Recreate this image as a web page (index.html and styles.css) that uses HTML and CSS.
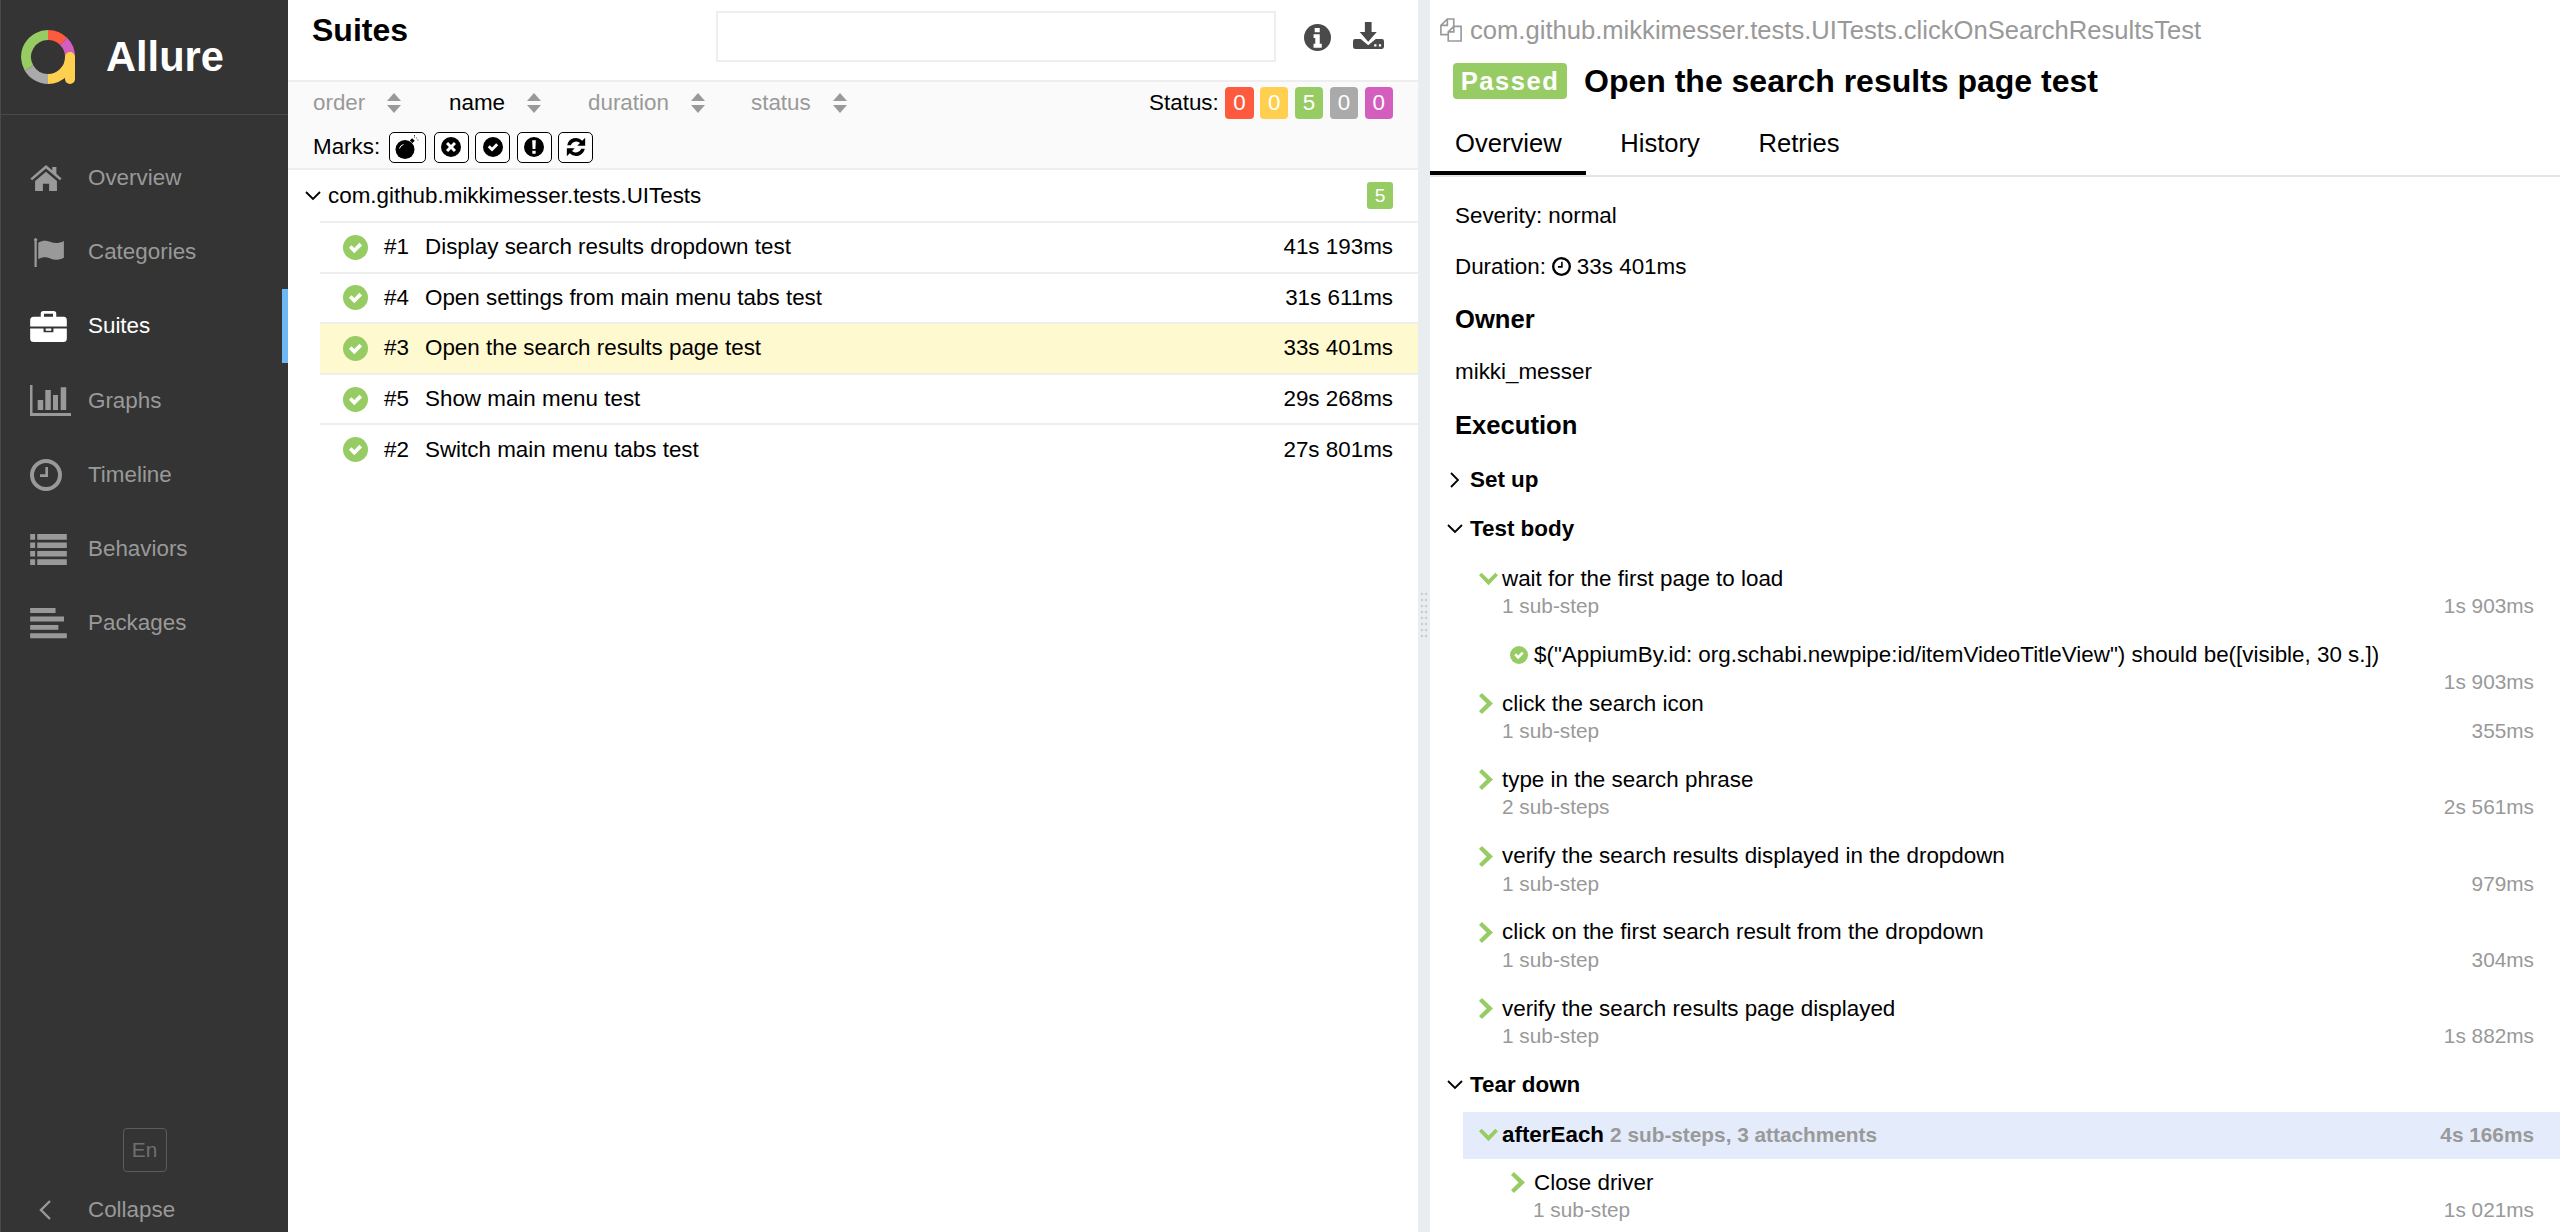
FILE: index.html
```html
<!DOCTYPE html>
<html lang="en">
<head>
<meta charset="UTF-8">
<title>Allure Report</title>
<link rel="stylesheet" href="styles.css">
</head>
<body>

<svg class="sprites" xmlns="http://www.w3.org/2000/svg">
  <symbol id="i-home" viewBox="0 0 24 20"><path d="M12 0 0 10.300l1.300 1.500L12 2.700l10.700 9.100 1.300-1.500-4-3.500V1.500h-3.200v2.600zM3.600 12.300 12 5.200l8.400 7.100V20h-6v-5.500H9.600V20h-6z"/></symbol>
  <symbol id="i-flag" viewBox="0 0 26 24"><path d="M1 3.200a1.300 1.300 0 1 1 1.800 0V24H1zM4 4.500c4-2.300 7-1.700 10-.5s6.500 1.300 10.500-.8v13.300c-4 2.100-7.500 2-10.500.8s-6-1.800-10 .5z"/></symbol>
  <symbol id="i-case" viewBox="0 0 26 22"><path fill-rule="evenodd" d="M7.500 4V1.800A1.800 1.800 0 0 1 9.300 0h7.400a1.800 1.800 0 0 1 1.800 1.800V4h5.300A2.500 2.500 0 0 1 26 6.500V11H0V6.500A2.500 2.500 0 0 1 2.500 4zm2.300 0h6.400V2H9.800zM0 12.500h9.500V15h7v-2.500H26v7a2.500 2.500 0 0 1-2.500 2.500h-21A2.500 2.500 0 0 1 0 19.500zM11 12.500h4V14h-4z"/></symbol>
  <symbol id="i-chart" viewBox="0 0 41 31"><path d="M0 0h2.500v28H41v3H0zM7.700 15h5.500v10H7.700zM15.300 5h5.500v20h-5.500zM23 10h5v15h-5zM30.700 2.300h5.500V25h-5.500z"/></symbol>
  <symbol id="i-clock" viewBox="0 0 24 24"><path fill-rule="evenodd" d="M12 0a12 12 0 1 1 0 24 12 12 0 0 1 0-24zm0 3a9 9 0 1 0 0 18 9 9 0 0 0 0-18zM13.500 6v7.500H7.500v-2h4V6z"/></symbol>
  <symbol id="i-list" viewBox="0 0 26 22"><path d="M0 0h3.500v4H0zM5 0h21v4H5zM0 6h3.500v4H0zM5 6h21v4H5zM0 12h3.500v4H0zM5 12h21v4H5zM0 18h3.500v4H0zM5 18h21v4H5z"/></symbol>
  <symbol id="i-pack" viewBox="0 0 26 22"><path d="M0 0h18v3.500H0zM0 6h24v3.500H0zM0 12h20v3.500H0zM0 18h26v3.500H0z"/></symbol>
  <symbol id="i-check" viewBox="0 0 24 24"><circle cx="12" cy="12" r="12"/><path d="m5.700 12.300 2.500-2.500 2.600 2.700 5-5 2.500 2.500-7.500 7.500z" fill="#fff"/></symbol>
  <symbol id="i-times" viewBox="0 0 24 24"><circle cx="12" cy="12" r="12"/><path d="m8.500 6 3.500 3.500L15.500 6 18 8.500 14.500 12l3.500 3.500-2.500 2.500-3.500-3.500L8.500 18 6 15.500 9.500 12 6 8.500z" fill="#fff"/></symbol>
  <symbol id="i-warn" viewBox="0 0 24 24"><circle cx="12" cy="12" r="12"/><path d="M9.800 4h4.400l-.5 10.500h-3.400zM10 16.500h4V20h-4z" fill="#fff"/></symbol>
  <symbol id="i-info" viewBox="0 0 24 24"><circle cx="12" cy="12" r="12"/><path d="M9.500 3.500h4.500v3.800H9.500zM8.500 9h5.500v8.500h1.800V21H8.500v-3.500h1.500v-5H8.500z" fill="#fff"/></symbol>
  <symbol id="i-bomb" viewBox="0 0 24 24"><circle cx="10" cy="14.500" r="9.500"/><path d="m14.800 5.400 2.400-2.200 2.500 2.500-2.200 2.400z"/><path d="M4.500 13.500a5.500 5.500 0 0 1 4-4" fill="none" stroke="#fff" stroke-width="1"/><path d="M19 2h.8M22 2.500l-.6.600M19.500 0v.8M22.500 5h.8" stroke="#000" stroke-width="1"/></symbol>
  <symbol id="i-refresh" viewBox="0 0 24 24"><path d="M23 1v9.500h-9.500l3.300-3.300a6.800 6.800 0 0 0-11 2.600H1.500A10.500 10.500 0 0 1 19.500 4.500zM1 23v-9.500h9.500l-3.300 3.300a6.800 6.800 0 0 0 11-2.600h4.300A10.500 10.500 0 0 1 4.500 19.500z"/></symbol>
  <symbol id="i-down" viewBox="0 0 30 26"><path d="M11.500 0h6.500v9.500h5L14.700 19 6.500 9.500h5z"/><path fill-rule="evenodd" d="M2 16.500h5.500l7.200 6 7.300-6h6A2 2 0 0 1 30 18.500V24a2 2 0 0 1-2 2H2a2 2 0 0 1-2-2v-5.500a2 2 0 0 1 2-2zM20.500 21.500v2.200h2.200v-2.200zM25 21.500v2.200h2.200v-2.200z"/></symbol>
  <symbol id="i-copy" viewBox="0 0 24 26"><path fill="none" stroke="currentColor" stroke-width="1.800" d="M9 18H1V8l7-7h7v8M8 1v7H1M15 9h8v16H9V15l6-6zM15 9v6H9"/></symbol>
  <symbol id="i-caret" viewBox="0 0 14 20"><path class="caret-up" d="M7 0l7 8H0z"/><path class="caret-down" d="M0 12h14l-7 8z"/></symbol>
</svg>

<div class="app">

  <aside class="side">
    <div class="brand">
      <svg class="logo" viewBox="0 0 56 54" fill="none" stroke-width="10">
        <path d="M27 5A22 22 0 0 1 42.600 11.400" stroke="#fd5a3e"/>
        <path d="M42.600 11.400A22 22 0 0 1 49 27" stroke="#d35ebe"/>
        <path d="M49 27V49" stroke="#ffd050" stroke-linecap="round"/>
        <path d="M49 27A22 22 0 0 1 27 49" stroke="#ffd050"/>
        <path d="M27 49A22 22 0 0 1 8 38" stroke="#aaa"/>
        <path d="M8 38A22 22 0 0 1 27 5" stroke="#97cc64"/>
      </svg>
      <span class="brand-name">Allure</span>
    </div>
    <nav class="nav">
      <a class="nav-item"><span class="nav-icon"><svg class="ic-home"><use href="#i-home"/></svg></span>Overview</a>
      <a class="nav-item"><span class="nav-icon"><svg class="ic-flag"><use href="#i-flag"/></svg></span>Categories</a>
      <a class="nav-item active"><span class="nav-icon"><svg class="ic-case"><use href="#i-case"/></svg></span>Suites</a>
      <a class="nav-item"><span class="nav-icon"><svg class="ic-chart"><use href="#i-chart"/></svg></span>Graphs</a>
      <a class="nav-item"><span class="nav-icon"><svg class="ic-clock"><use href="#i-clock"/></svg></span>Timeline</a>
      <a class="nav-item"><span class="nav-icon"><svg class="ic-list"><use href="#i-list"/></svg></span>Behaviors</a>
      <a class="nav-item"><span class="nav-icon"><svg class="ic-list"><use href="#i-pack"/></svg></span>Packages</a>
    </nav>
    <div class="side-foot">
      <div class="lang">En</div>
      <a class="collapse">
        <span class="nav-icon"><svg class="ic-back" viewBox="0 0 14 22" fill="none" stroke="currentColor" stroke-width="2.400"><path d="M12 2 3 11l9 9"/></svg></span>Collapse
      </a>
    </div>
  </aside>

  <main class="suites">
    <header class="suites-head">
      <h2 class="suites-title">Suites</h2>
      <input class="search" type="text">
      <svg class="ic-info"><use href="#i-info"/></svg>
      <svg class="ic-down"><use href="#i-down"/></svg>
    </header>

    <div class="controls">
      <div class="sort-line">
        <div class="sort-cols">
          <span class="sort-item">order<svg class="caret"><use href="#i-caret"/></svg></span>
          <span class="sort-item current">name<svg class="caret"><use href="#i-caret"/></svg></span>
          <span class="sort-item">duration<svg class="caret"><use href="#i-caret"/></svg></span>
          <span class="sort-item">status<svg class="caret"><use href="#i-caret"/></svg></span>
        </div>
        <div class="status-filter">
          Status:
          <span class="badge red">0</span>
          <span class="badge yellow">0</span>
          <span class="badge green">5</span>
          <span class="badge gray">0</span>
          <span class="badge purple">0</span>
        </div>
      </div>
      <div class="marks">
        Marks:
        <button class="mark wide"><svg><use href="#i-bomb"/></svg></button>
        <button class="mark"><svg><use href="#i-times"/></svg></button>
        <button class="mark"><svg><use href="#i-check"/></svg></button>
        <button class="mark"><svg><use href="#i-warn"/></svg></button>
        <button class="mark"><svg><use href="#i-refresh"/></svg></button>
      </div>
    </div>

    <div class="group">
      <svg class="chev-down" viewBox="0 0 16 10" fill="none" stroke="currentColor" stroke-width="1.800"><path d="m1 1 7 7 7-7"/></svg>
      <span class="group-name">com.github.mikkimesser.tests.UITests</span>
      <span class="count">5</span>
    </div>

    <div class="rows">
      <div class="row"><svg class="ok"><use href="#i-check"/></svg><span class="row-id">#1</span><span class="row-name">Display search results dropdown test</span><span class="row-time">41s 193ms</span></div>
      <div class="row"><svg class="ok"><use href="#i-check"/></svg><span class="row-id">#4</span><span class="row-name">Open settings from main menu tabs test</span><span class="row-time">31s 611ms</span></div>
      <div class="row selected"><svg class="ok"><use href="#i-check"/></svg><span class="row-id">#3</span><span class="row-name">Open the search results page test</span><span class="row-time">33s 401ms</span></div>
      <div class="row"><svg class="ok"><use href="#i-check"/></svg><span class="row-id">#5</span><span class="row-name">Show main menu test</span><span class="row-time">29s 268ms</span></div>
      <div class="row"><svg class="ok"><use href="#i-check"/></svg><span class="row-id">#2</span><span class="row-name">Switch main menu tabs test</span><span class="row-time">27s 801ms</span></div>
    </div>
  </main>

  <div class="resizer"><div class="grip"></div></div>

  <section class="detail">
    <div class="fullname"><svg class="ic-copy"><use href="#i-copy"/></svg>com.github.mikkimesser.tests.UITests.clickOnSearchResultsTest</div>
    <div class="title-line">
      <span class="passed">Passed</span>
      <h2 class="test-title">Open the search results page test</h2>
    </div>
    <div class="tabs">
      <a class="tab active">Overview</a>
      <a class="tab">History</a>
      <a class="tab">Retries</a>
    </div>

    <div class="body">
      <div class="info">Severity: normal</div>
      <div class="info">Duration: <svg class="ic-dur"><use href="#i-clock"/></svg> 33s 401ms</div>
      <h3 class="sec owner">Owner</h3>
      <div class="info">mikki_messer</div>
      <h3 class="sec execution">Execution</h3>

      <div class="stage"><svg class="chev-right" viewBox="0 0 10 16" fill="none" stroke="currentColor" stroke-width="1.800"><path d="m1 1 7 7-7 7"/></svg>Set up</div>
      <div class="stage"><svg class="chev-down" viewBox="0 0 16 10" fill="none" stroke="currentColor" stroke-width="1.800"><path d="m1 1 7 7 7-7"/></svg>Test body</div>

      <div class="steps">
        <div class="step open">
          <div class="step-title"><svg class="step-open" viewBox="0 0 18 12"><path d="M0 2.500 2.500 0 9 6.500 15.500 0 18 2.500 9 12z"/></svg>wait for the first page to load</div>
          <div class="step-meta"><span>1 sub-step</span><span>1s 903ms</span></div>
          <div class="substep">
            <div class="sub-title"><svg class="sub-ok"><use href="#i-check"/></svg>$("AppiumBy.id: org.schabi.newpipe:id/itemVideoTitleView") should be([visible, 30 s.])</div>
            <div class="sub-time">1s 903ms</div>
          </div>
        </div>
        <div class="step">
          <div class="step-title"><svg class="step-closed" viewBox="0 0 12 18"><path d="M2.500 0 12 9l-9.500 9L0 15.500 6.500 9 0 2.500z"/></svg>click the search icon</div>
          <div class="step-meta"><span>1 sub-step</span><span>355ms</span></div>
        </div>
        <div class="step">
          <div class="step-title"><svg class="step-closed" viewBox="0 0 12 18"><path d="M2.500 0 12 9l-9.500 9L0 15.500 6.500 9 0 2.500z"/></svg>type in the search phrase</div>
          <div class="step-meta"><span>2 sub-steps</span><span>2s 561ms</span></div>
        </div>
        <div class="step">
          <div class="step-title"><svg class="step-closed" viewBox="0 0 12 18"><path d="M2.500 0 12 9l-9.500 9L0 15.500 6.500 9 0 2.500z"/></svg>verify the search results displayed in the dropdown</div>
          <div class="step-meta"><span>1 sub-step</span><span>979ms</span></div>
        </div>
        <div class="step">
          <div class="step-title"><svg class="step-closed" viewBox="0 0 12 18"><path d="M2.500 0 12 9l-9.500 9L0 15.500 6.500 9 0 2.500z"/></svg>click on the first search result from the dropdown</div>
          <div class="step-meta"><span>1 sub-step</span><span>304ms</span></div>
        </div>
        <div class="step last">
          <div class="step-title"><svg class="step-closed" viewBox="0 0 12 18"><path d="M2.500 0 12 9l-9.500 9L0 15.500 6.500 9 0 2.500z"/></svg>verify the search results page displayed</div>
          <div class="step-meta"><span>1 sub-step</span><span>1s 882ms</span></div>
        </div>
      </div>

      <div class="stage"><svg class="chev-down" viewBox="0 0 16 10" fill="none" stroke="currentColor" stroke-width="1.800"><path d="m1 1 7 7 7-7"/></svg>Tear down</div>

      <div class="fixture">
        <svg class="step-open" viewBox="0 0 18 12"><path d="M0 2.500 2.500 0 9 6.500 15.500 0 18 2.500 9 12z"/></svg>
        <b class="fixture-name">afterEach</b>
        <span class="fixture-meta">2 sub-steps, 3 attachments</span>
        <span class="fixture-time">4s 166ms</span>
      </div>
      <div class="nested">
        <div class="step-title"><svg class="step-closed" viewBox="0 0 12 18"><path d="M2.500 0 12 9l-9.500 9L0 15.500 6.500 9 0 2.500z"/></svg>Close driver</div>
        <div class="step-meta"><span>1 sub-step</span><span>1s 021ms</span></div>
      </div>
    </div>
  </section>

</div>

</body>
</html>
```

FILE: styles.css
```css
* {
  box-sizing: border-box;
}

html, body {
  margin: 0;
  height: 100%;
  overflow: hidden;
}

body {
  font-family: "Liberation Sans", Arial, sans-serif;
  font-size: 22.4px;
  color: #000;
  background: #fff;
}

.sprites {
  display: none;
}

.app {
  display: grid;
  grid-template-columns: 288px 1130px 12px 1fr;
  height: 1232px;
}

/* sidebar */
.side {
  display: flex;
  flex-direction: column;
  background: #343434;
  color: #999;
  border-left: 1px solid #4a4a4a;
}

.brand {
  display: flex;
  align-items: center;
  height: 115px;
  padding-left: 20px;
  border-bottom: 1px solid #4a4a4a;
}

.logo {
  width: 56px;
  height: 54px;
  margin-right: 29px;
}

.brand-name {
  font-size: 41.6px;
  font-weight: bold;
  color: #fff;
}

.nav {
  padding-top: 25.5px;
  flex: 1;
}

.nav-item {
  display: flex;
  align-items: center;
  height: 74.3px;
  padding-left: 29px;
}

.nav-item.active {
  color: #fff;
  border-right: 6px solid #6eb8f5;
}

.nav-icon {
  display: flex;
  align-items: center;
  width: 58px;
  fill: #999;
}

.active .nav-icon {
  fill: #fff;
}

.ic-home { width: 32px; height: 26px; }
.ic-flag { width: 33px; height: 30px; margin-left: 3px; }
.ic-case { width: 37px; height: 31px; }
.ic-chart { width: 41px; height: 31px; }
.ic-clock { width: 32px; height: 32px; }
.ic-list { width: 37px; height: 31px; }
.ic-back { width: 14px; height: 22px; margin-left: 8px; }

.side-foot {
  display: flex;
  flex-direction: column;
  align-items: center;
}

.lang {
  display: flex;
  align-items: center;
  justify-content: center;
  width: 44px;
  height: 44px;
  border: 1px solid #5c5c5c;
  border-radius: 4px;
  color: #6f6f6f;
  font-size: 20.8px;
}

.collapse {
  display: flex;
  align-items: center;
  align-self: stretch;
  height: 44px;
  margin-top: 16px;
  padding-left: 29px;
}

/* suites column */
.suites-head {
  display: flex;
  align-items: flex-start;
  height: 82px;
  padding: 11px 0 0 24px;
  border-bottom: 2px solid #eee;
}

.suites-title {
  width: 404px;
  margin: 0;
  font-size: 32px;
  line-height: 38px;
}

.search {
  width: 560px;
  height: 51px;
  border: 2px solid #eee;
  background: #fff;
}

.ic-info {
  width: 27px;
  height: 27px;
  margin: 13px 0 0 28px;
  fill: #4a4a4a;
}

.ic-down {
  width: 31px;
  height: 27px;
  margin: 11px 0 0 22px;
  fill: #4a4a4a;
}

.controls {
  height: 88px;
  padding: 0 25px;
  background: #fafafa;
  border-bottom: 2px solid #eee;
}

.sort-line {
  display: flex;
  justify-content: space-between;
  height: 42px;
}

.sort-cols {
  display: grid;
  grid-template-columns: 136px 139px 163px auto;
  align-items: center;
}

.sort-item {
  display: flex;
  align-items: center;
  gap: 22px;
  color: #999;
  fill: #999;
}

.sort-item.current {
  color: #000;
}

.current .caret-up {
  fill: #000;
}

.caret {
  width: 14px;
  height: 20px;
}

.status-filter {
  display: flex;
  align-items: center;
  gap: 6.4px;
}

.badge {
  display: flex;
  align-items: center;
  justify-content: center;
  height: 32px;
  padding: 0 8px;
  border-radius: 4px;
  color: #fff;
}

.red { background: #fd5a3e; }
.yellow { background: #ffd050; }
.green { background: #97cc64; }
.gray { background: #aaa; }
.purple { background: #d35ebe; }

.marks {
  display: flex;
  align-items: center;
  height: 44px;
  padding-top: 2px;
  gap: 6.5px;
}

.mark {
  display: flex;
  align-items: center;
  justify-content: center;
  width: 35px;
  height: 31px;
  padding: 0;
  border: 1.5px solid #000;
  border-radius: 5px;
  background: #fff;
}

.mark.wide {
  width: 37px;
  margin-left: 2px;
  margin-right: 1.5px;
}

.mark svg {
  width: 20px;
  height: 20px;
}

.mark.wide svg {
  width: 24px;
  height: 24px;
}

.group {
  display: flex;
  align-items: center;
  height: 51px;
  padding: 0 25px 0 17px;
}

.chev-down {
  width: 16px;
  height: 10px;
  color: #000;
}

.group-name {
  margin-left: 7px;
  flex: 1;
}

.count {
  display: flex;
  align-items: center;
  justify-content: center;
  width: 26px;
  height: 27px;
  border-radius: 3px;
  background: #97cc64;
  color: #fff;
  font-size: 19.2px;
}

.rows {
  margin-left: 32px;
}

.row {
  display: flex;
  align-items: center;
  height: 50.6px;
  padding: 0 25px 0 23px;
  border-top: 2px solid #eee;
}

.row.selected {
  background: #fff9cf;
}

.ok {
  width: 25px;
  height: 25px;
  margin-right: 16px;
  fill: #97cc64;
}

.row-id {
  width: 41px;
}

.row-name {
  flex: 1;
}

/* resizer between the panes */
.resizer {
  display: flex;
  align-items: center;
  justify-content: center;
  background: #e9edf0;
}

.grip {
  width: 8px;
  height: 50px;
  background-image: radial-gradient(circle, #c8ccd0 1.4px, transparent 1.6px);
  background-size: 4px 6px;
}

/* test detail */
.detail {
  overflow: hidden;
  padding-left: 1px;
}

.fullname {
  display: flex;
  align-items: center;
  height: 60px;
  padding-left: 9px;
  color: #999;
  font-size: 25.6px;
}

.ic-copy {
  width: 22px;
  height: 24px;
  margin-right: 8px;
  color: #999;
}

.title-line {
  display: flex;
  align-items: center;
  height: 42px;
  padding-left: 22px;
}

.passed {
  display: flex;
  align-items: center;
  justify-content: center;
  width: 114px;
  height: 36px;
  border-radius: 4px;
  background: #97cc64;
  color: #fff;
  font-size: 25.6px;
  font-weight: bold;
  letter-spacing: 1.5px;
}

.test-title {
  margin: 0 0 0 17px;
  font-size: 32px;
}

.tabs {
  display: flex;
  gap: 9.6px;
  height: 75px;
  margin-left: -1px;
  border-bottom: 2px solid #e5e5e5;
}

.tab {
  display: flex;
  align-items: center;
  height: 73px;
  padding: 9px 24px 0 25px;
  font-size: 25.6px;
}

.tab.active {
  box-shadow: inset 0 -4px #000;
}

.body {
  padding: 13px 0 0 0;
}

.info {
  display: flex;
  align-items: center;
  height: 51px;
  padding-left: 24px;
}

.ic-dur {
  width: 19px;
  height: 19px;
  margin: 0 6px;
}

.sec {
  display: flex;
  align-items: center;
  margin: 0;
  padding-left: 24px;
  font-size: 25.6px;
}

.owner { height: 54px; }
.execution { height: 58px; padding-bottom: 2px; }

.stage {
  display: flex;
  align-items: center;
  height: 49px;
  padding-left: 16px;
  font-weight: bold;
}

.stage .chev-down {
  margin-right: 7px;
}

.chev-right {
  width: 10px;
  height: 16px;
  margin: 0 10px 0 3px;
}

.steps {
  padding: 12px 0 11px;
}

.step {
  padding-bottom: 22.3px;
}

.step.open,
.step.last {
  padding-bottom: 0;
}

.step-title {
  display: flex;
  align-items: center;
  height: 27px;
  padding-left: 48px;
}

.step-open {
  width: 19px;
  height: 14px;
  margin-right: 4px;
  fill: #97cc64;
}

.step-closed {
  width: 14px;
  height: 21px;
  margin: 0 9px 0 0;
  fill: #97cc64;
}

.step-meta {
  display: flex;
  justify-content: space-between;
  height: 27px;
  padding: 0 26px 0 71px;
  color: #999;
  font-size: 20.8px;
  line-height: 27px;
}

.substep {
  height: 49px;
  margin-top: 22px;
}

.sub-title {
  display: flex;
  align-items: center;
  height: 27px;
  padding-left: 79px;
}

.sub-ok {
  width: 18px;
  height: 18px;
  margin-right: 6px;
  fill: #97cc64;
}

.sub-time {
  height: 22px;
  padding-right: 26px;
  text-align: right;
  color: #999;
  font-size: 20.8px;
  line-height: 27px;
}

.fixture {
  display: flex;
  align-items: center;
  height: 47px;
  margin: 2.5px 0 0 32px;
  padding: 0 26px 0 16px;
  background: #e4ebfb;
}

.fixture-name {
  margin-right: 6px;
}

.fixture-meta {
  flex: 1;
  color: #999;
  font-size: 20.8px;
  font-weight: bold;
}

.fixture-time {
  color: #999;
  font-size: 20.8px;
  font-weight: bold;
}

.nested {
  padding-top: 10.5px;
}

.nested .step-title {
  padding-left: 80px;
}

.nested .step-meta {
  padding-left: 102px;
}
```
